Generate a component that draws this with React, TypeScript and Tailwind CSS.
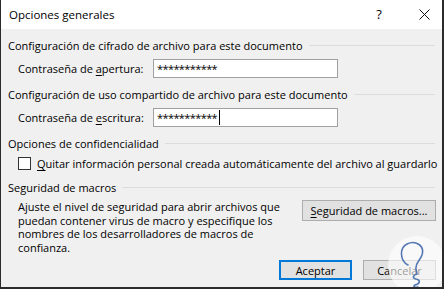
import React from "react";

const font = { fontFamily: '"Open Sans", "Noto Sans", sans-serif' };

const SectionTitle = ({ text }: { text: string }) => (
  <div className="flex items-center h-[16px]">
    <span className="whitespace-nowrap">{text}</span>
    <div className="flex-1 h-px bg-[#dcdcdc] ml-[6px]" />
  </div>
);

const PasswordRow = ({ label, hot, rest, caret }: { label: string; hot: string; rest: string; caret?: boolean }) => (
  <div className="flex items-center h-[19px] pl-[10px]">
    <span className="w-[135px] shrink-0 whitespace-nowrap">
      {label}
      <span className="underline underline-offset-2">{hot}</span>
      {rest}
    </span>
    <div className="w-[185px] shrink-0 h-[19px] bg-white border border-[#a0a0a0] flex items-center pl-[3px] text-[11px] tracking-[-0.6px]">
      ***********
      {caret && <span className="w-px h-[15px] bg-black ml-[2px]" />}
    </div>
  </div>
);

const Watermark = () => (
  <div className="absolute left-[387px] top-[236px] w-[58px] h-[58px] rounded-full bg-white/60">
    <svg width="58" height="58" viewBox="0 0 58 58" fill="none">
      <path
        d="M20 29 C12 25 11 12 19 8 C27 4 37 9 34 19 C32 25 27 27 28 33 L29 38 C25 39 24 42 28 43 C33 44 32 48 27 49 C25 50 26 52 30 51"
        stroke="#5478b4"
        strokeWidth="1.6"
        strokeLinecap="round"
      />
    </svg>
  </div>
);

export default function App() {
  return (
    <div
      className="relative w-[444px] h-[289px] overflow-hidden bg-[#f0f0f0] border-l border-r-2 border-b-2 border-[#2b2b2b] text-[11px] text-black leading-none"
      style={font}
    >
      <div className="h-[29px] bg-white flex items-center pl-[8px]">
        <span className="flex-1 text-[11.5px]">Opciones generales</span>
        <span className="w-[10px] text-center mr-[35px] text-[13px]">?</span>
        <svg width="11" height="11" viewBox="0 0 11 11" className="mr-[12px]">
          <path d="M0.5 0.5 L10.5 10.5 M10.5 0.5 L0.5 10.5" stroke="#111" strokeWidth="1" />
        </svg>
      </div>

      <div className="px-[7px]">
        <div className="mt-[8px]">
          <SectionTitle text="Configuración de cifrado de archivo para este documento" />
        </div>
        <div className="mt-[6px]">
          <PasswordRow label="Contraseña de " hot="a" rest="pertura:" />
        </div>
        <div className="mt-[8px]">
          <SectionTitle text="Configuración de uso compartido de archivo para este documento" />
        </div>
        <div className="mt-[6px]">
          <PasswordRow label="Contraseña de " hot="e" rest="scritura:" caret />
        </div>
        <div className="mt-[8px]">
          <SectionTitle text="Opciones de confidencialidad" />
        </div>
        <div className="mt-[4px] flex items-center h-[16px] pl-[10px]">
          <div className="w-[13px] h-[13px] shrink-0 bg-white border border-[#333]" />
          <span className="ml-[6px] whitespace-nowrap">
            <span className="underline underline-offset-2">Q</span>uitar información personal creada automáticamente del archivo al guardarlo
          </span>
        </div>
        <div className="mt-[8px]">
          <SectionTitle text="Seguridad de macros" />
        </div>
        <div className="flex mt-[5px] pl-[10px]">
          <p className="whitespace-nowrap leading-[13.5px]">
            Ajuste el nivel de seguridad para abrir archivos que
            <br />
            puedan contener virus de macro y especifique los
            <br />
            nombres de los desarrolladores de macros de
            <br />
            confianza.
          </p>
          <div className="ml-auto mr-[-1px] w-[134px] shrink-0 h-[21px] bg-[#e1e1e1] border border-[#adadad] flex items-center justify-center">
            <span><span className="underline underline-offset-2">S</span>eguridad de macros...</span>
          </div>
        </div>
        <div className="flex justify-end gap-[11px] mt-[6px] mr-[-1px]">
          <div className="w-[73px] h-[20px] bg-[#e1e1e1] border-2 border-[#0078d7] flex items-center justify-center">Aceptar</div>
          <div className="w-[73px] h-[20px] bg-[#e1e1e1] border border-[#adadad] flex items-center justify-center">Cancelar</div>
        </div>
      </div>
      <Watermark />
    </div>
  );
}
